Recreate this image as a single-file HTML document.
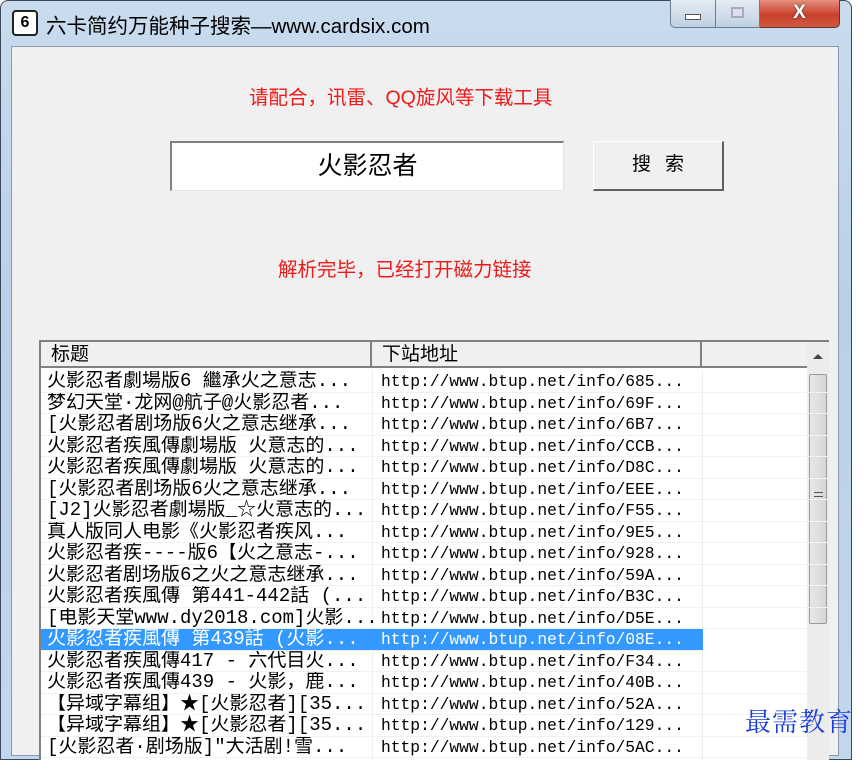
<!DOCTYPE html>
<html><head><meta charset="utf-8"><style>
*{margin:0;padding:0;box-sizing:border-box}
body{width:866px;height:750px;overflow:hidden;background:#fff;position:relative;font-family:"Liberation Sans","WenQuanYi Zen Hei","Noto Sans CJK SC",sans-serif}
.frame{position:absolute;left:0;top:0;width:852px;height:760px;background:linear-gradient(180deg,#c9dcee 0%,#b9d0e8 40%,#c3d7ec 100%);border:1px solid #3a4a5a;border-radius:8px 8px 0 0}
.client{position:absolute;left:11px;top:46px;width:828px;height:710px;background:#f0f0f0;border:1px solid #8a9aa8}
.abs{position:absolute}
.red{color:#f01818;font-size:19.5px;white-space:nowrap}
.row{position:absolute;left:0;height:21.5px;width:786px;border-bottom:1px solid #f0f0f0;font-size:17px;line-height:21px;white-space:nowrap}
.c1{position:absolute;left:6px;width:326px;overflow:hidden;font-family:"Liberation Mono","WenQuanYi Zen Hei","Noto Sans CJK SC",monospace;font-size:19px;color:#000;line-height:20px}
.c2{position:absolute;left:340px;font-family:"Liberation Mono",monospace;font-size:16.3px;color:#000}
.sel{background:#3399ff}
.sel span{color:#fff}
</style></head><body>
<div class="frame"></div>
<div class="abs" style="left:12px;top:10px;width:26px;height:26px;border:2px solid #222;border-radius:4px;background:#fff;font:bold 16px 'Liberation Sans';text-align:center;line-height:22px">6</div>
<div class="abs" style="left:46px;top:9px;font-size:20.5px;color:#000;white-space:nowrap">六卡简约万能种子搜索—www.cardsix.com</div>
<div class="abs" style="left:670px;top:0;width:46px;height:28px;border:1px solid #6c7c8c;border-top:none;border-radius:0 0 0 5px;background:linear-gradient(#e4ecf4,#c0d0e0)"><div style="position:absolute;left:14px;top:14px;width:16px;height:6px;border:1px solid #555;background:#fff"></div></div>
<div class="abs" style="left:716px;top:0;width:44px;height:28px;border:1px solid #6c7c8c;border-top:none;border-left:none;background:linear-gradient(#e4ecf4,#c0d0e0)"><div style="position:absolute;left:15px;top:7px;width:13px;height:11px;border:2px solid #aab;background:#dde"></div></div>
<div class="abs" style="left:760px;top:0;width:80px;height:28px;border:1px solid #6c3030;border-top:none;border-left:none;border-radius:0 0 5px 0;background:linear-gradient(#e89080,#c8402c 55%,#d05a40);color:#fff;font:bold 19px 'Liberation Sans';text-align:center;line-height:26px;text-shadow:0 0 2px #333">X</div>
<div class="client"></div>
<div class="abs red" style="left:249px;top:81px">请配合，讯雷、QQ旋风等下载工具</div>
<div class="abs" style="left:170px;top:141px;width:394px;height:50px;background:#fff;border-top:2px solid #808080;border-left:2px solid #808080;border-right:1px solid #e4e4e4;border-bottom:1px solid #e4e4e4;text-align:center;font-size:25px;line-height:46px">火影忍者</div>
<div class="abs" style="left:593px;top:141px;width:131px;height:50px;background:#f0f0f0;border-top:1px solid #fff;border-left:1px solid #fff;border-right:2px solid #606060;border-bottom:2px solid #606060;text-align:center;font-size:19px;line-height:46px;letter-spacing:14px;padding-left:14px">搜索</div>
<div class="abs red" style="left:278px;top:253px">解析完毕，已经打开磁力链接</div>
<div class="abs" style="left:39px;top:340px;width:790px;height:420px;background:#fff;border-top:2px solid #808080;border-left:2px solid #808080;overflow:hidden">
 <div class="abs" style="left:0;top:0;width:766px;height:26px;background:#f0f0f0;border-bottom:2px solid #808080;font-size:19px;line-height:26px">
  <div class="abs" style="left:0;top:0;width:331px;height:24px;border-right:2px solid #808080;padding-left:10px">标题</div>
  <div class="abs" style="left:333px;top:0;width:328px;height:24px;border-right:2px solid #808080;padding-left:8px">下站地址</div>
 </div>
 <div class="abs" style="left:766px;top:0;width:22px;height:420px;background:#ececec">
  <div style="position:absolute;left:3px;top:4px;width:0;height:0;border-left:5px solid transparent;border-right:5px solid transparent;border-bottom:5px solid #444;margin-left:3px;margin-top:8px"></div>
  <div style="position:absolute;left:2px;top:32px;width:18px;height:250px;border:1px solid #9a9a9a;border-radius:2px;background:linear-gradient(90deg,#e8e8e8,#d6d6d6)"><div style="position:absolute;left:4px;top:117px;width:9px;height:8px;border-top:1px solid #555;border-bottom:1px solid #555"></div><div style="position:absolute;left:4px;top:121px;width:9px;border-top:1px solid #555"></div></div>
 </div>
 <div class="abs" style="left:331px;top:28px;height:400px;border-left:1px solid #eee"></div>
 <div class="abs" style="left:661px;top:28px;height:400px;border-left:1px solid #eee"></div>
 <div class="abs" style="left:0;top:29px;width:766px">
  <div class="row" style="top:0"><span class="c1">火影忍者劇場版6 繼承火之意志...</span><span class="c2">http://www.btup.net/info/685...</span></div>
  <div class="row" style="top:21.5px"><span class="c1">梦幻天堂·龙网@航子@火影忍者...</span><span class="c2">http://www.btup.net/info/69F...</span></div>
  <div class="row" style="top:43px"><span class="c1">[火影忍者剧场版6火之意志继承...</span><span class="c2">http://www.btup.net/info/6B7...</span></div>
  <div class="row" style="top:64.5px"><span class="c1">火影忍者疾風傳劇場版 火意志的...</span><span class="c2">http://www.btup.net/info/CCB...</span></div>
  <div class="row" style="top:86px"><span class="c1">火影忍者疾風傳劇場版 火意志的...</span><span class="c2">http://www.btup.net/info/D8C...</span></div>
  <div class="row" style="top:107.5px"><span class="c1">[火影忍者剧场版6火之意志继承...</span><span class="c2">http://www.btup.net/info/EEE...</span></div>
  <div class="row" style="top:129px"><span class="c1">[J2]火影忍者劇場版_☆火意志的...</span><span class="c2">http://www.btup.net/info/F55...</span></div>
  <div class="row" style="top:150.5px"><span class="c1">真人版同人电影《火影忍者疾风...</span><span class="c2">http://www.btup.net/info/9E5...</span></div>
  <div class="row" style="top:172px"><span class="c1">火影忍者疾----版6【火之意志-...</span><span class="c2">http://www.btup.net/info/928...</span></div>
  <div class="row" style="top:193.5px"><span class="c1">火影忍者剧场版6之火之意志继承...</span><span class="c2">http://www.btup.net/info/59A...</span></div>
  <div class="row" style="top:215px"><span class="c1">火影忍者疾風傳 第441-442話 (...</span><span class="c2">http://www.btup.net/info/B3C...</span></div>
  <div class="row" style="top:236.5px"><span class="c1">[电影天堂www.dy2018.com]火影...</span><span class="c2">http://www.btup.net/info/D5E...</span></div>
  <div class="row sel" style="top:258px;width:662px"><span class="c1">火影忍者疾風傳 第439話 (火影...</span><span class="c2">http://www.btup.net/info/08E...</span></div>
  <div class="row" style="top:279.5px"><span class="c1">火影忍者疾風傳417 - 六代目火...</span><span class="c2">http://www.btup.net/info/F34...</span></div>
  <div class="row" style="top:301px"><span class="c1">火影忍者疾風傳439 - 火影，鹿...</span><span class="c2">http://www.btup.net/info/40B...</span></div>
  <div class="row" style="top:322.5px"><span class="c1">【异域字幕组】★[火影忍者][35...</span><span class="c2">http://www.btup.net/info/52A...</span></div>
  <div class="row" style="top:344px"><span class="c1">【异域字幕组】★[火影忍者][35...</span><span class="c2">http://www.btup.net/info/129...</span></div>
  <div class="row" style="top:365.5px"><span class="c1">[火影忍者·剧场版]"大活剧!雪...</span><span class="c2">http://www.btup.net/info/5AC...</span></div>
 </div>
</div>
<div class="abs" style="left:745px;top:702px;font-family:'Noto Serif CJK SC',serif;font-size:26px;color:#1a3cd8;letter-spacing:1px;white-space:nowrap">最需教育</div>
</body></html>
